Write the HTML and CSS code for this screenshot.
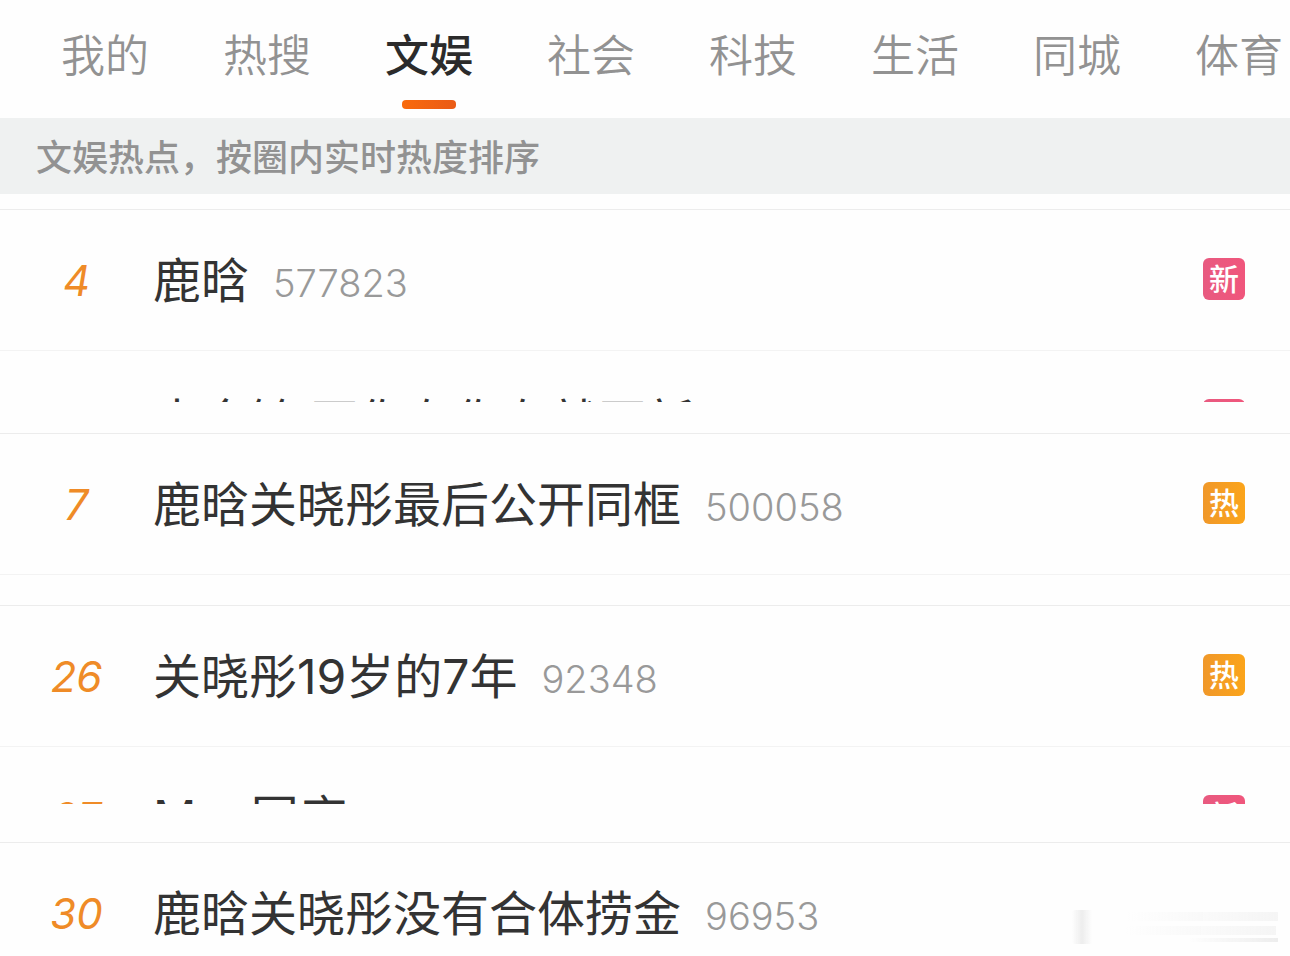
FILE: index.html
```html
<!DOCTYPE html>
<html lang="zh-CN">
<head>
    <meta charset="UTF-8">
    <meta name="viewport" content="width=device-width, initial-scale=1.0">
    <title>文娱热点</title>
    <link rel="stylesheet" href="styles.css">
</head>
<body>
    <nav class="tabs">
        <button class="tab" type="button">我的</button>
        <button class="tab" type="button">热搜</button>
        <button class="tab active" type="button">文娱</button>
        <button class="tab" type="button">社会</button>
        <button class="tab" type="button">科技</button>
        <button class="tab" type="button">生活</button>
        <button class="tab" type="button">同城</button>
        <button class="tab" type="button">体育</button>
    </nav>

    <p class="notice">文娱热点，按圈内实时热度排序</p>

    <main class="list">
        <section class="group">
            <a class="row" href="#">
                <span class="rank">4</span>
                <span class="title">鹿晗</span>
                <span class="count">577823</span>
                <span class="badge new">新</span>
            </a>
            <!-- folded row, only its top edge shows -->
            <div class="folded">
                <a class="row" href="#">
                    <span class="rank"></span>
                    <span class="title">木金铃 再你有你有就再新王</span>
                    <span class="badge new">新</span>
                </a>
            </div>
        </section>

        <section class="group">
            <a class="row" href="#">
                <span class="rank">7</span>
                <span class="title">鹿晗关晓彤最后公开同框</span>
                <span class="count">500058</span>
                <span class="badge hot">热</span>
            </a>
        </section>

        <section class="group">
            <a class="row" href="#">
                <span class="rank">26</span>
                <span class="title">关晓彤19岁的7年</span>
                <span class="count">92348</span>
                <span class="badge hot">热</span>
            </a>
            <div class="folded tall">
                <a class="row" href="#">
                    <span class="rank">27</span>
                    <span class="title">Mac国庆</span>
                    <span class="badge new">新</span>
                </a>
            </div>
        </section>

        <section class="group last">
            <a class="row" href="#">
                <span class="rank">30</span>
                <span class="title">鹿晗关晓彤没有合体捞金</span>
                <span class="count">96953</span>
            </a>
        </section>
    </main>

    <div class="watermark"></div>
</body>
</html>
```
FILE: styles.css
```css
* {
    box-sizing: border-box;
}

body {
    position: relative;
    margin: 0;
    min-height: 100vh;
    background: #fefefe;
    color: #333;
    font-family: Inter, "Noto Sans CJK SC", sans-serif;
}

.tabs {
    display: flex;
    gap: 74px;
    height: 118px;
    padding: 0 0 0 61px;
    overflow: hidden;
}

.tab {
    position: relative;
    flex: none;
    padding: 0 0 12px;
    border: none;
    background: none;
    color: #929292;
    font-family: "Noto Sans CJK SC", sans-serif;
    font-size: 44px;
    font-weight: 350;
    cursor: pointer;
}

.tab.active {
    color: #2b2b2b;
    font-weight: 500;
}

.tab.active::after {
    content: "";
    position: absolute;
    left: 17px;
    right: 17px;
    bottom: 9px;
    height: 9px;
    border-radius: 4px;
    background: linear-gradient(90deg, #f96a0c, #ea5b16);
}

.notice {
    margin: 0 0 15px;
    padding: 0 36px 2px;
    background: #eff1f1;
    color: #929292;
    font-family: "Noto Sans CJK SC", sans-serif;
    font-size: 36px;
    font-weight: 500;
    line-height: 74px;
}

.group {
    margin-bottom: 30px;
    border-top: 1px solid #ececec;
}

.group.last {
    margin-bottom: 0;
}

.row {
    display: flex;
    align-items: center;
    padding: 34px 45px 36px 0;
    border-bottom: 1px solid #f3f3f3;
    color: inherit;
    text-decoration: none;
}

.group.last .row {
    padding-bottom: 0;
    border-bottom: none;
}

.rank {
    flex: none;
    width: 153px;
    padding-top: 2px;
    color: #ef8b27;
    font-size: 42px;
    font-style: italic;
    font-weight: 400;
    text-align: center;
}

.title {
    padding-top: 4px;
    font-size: 48px;
    font-weight: 400;
    line-height: 66px;
    white-space: nowrap;
}

.count {
    margin-left: 24px;
    padding-top: 8px;
    color: #999;
    font-size: 38px;
    font-weight: 350;
}

.badge {
    width: 42px;
    height: 42px;
    margin-left: auto;
    border-radius: 6px;
    color: #fff;
    font-size: 30px;
    font-weight: 500;
    line-height: 42px;
    text-align: center;
}

.badge.new {
    background: linear-gradient(90deg, #e85a80, #f0567c);
}

.badge.hot {
    background: linear-gradient(90deg, #f0982a, #fba41a);
}

.folded {
    height: 51px;
    margin-bottom: 31px;
    overflow: hidden;
}

.folded.tall {
    height: 57px;
    margin-bottom: 38px;
}

.watermark {
    position: absolute;
    right: 12px;
    bottom: 12px;
    width: 206px;
    height: 34px;
    background:
        linear-gradient(90deg, transparent, #ededed, transparent) left / 20px 34px no-repeat,
        linear-gradient(90deg, transparent, #f5f5f5) right 0 top 2px / 150px 9px no-repeat,
        linear-gradient(90deg, transparent, #f5f5f5) right 2px top 16px / 150px 9px no-repeat,
        linear-gradient(90deg, transparent, #ededed) right 0 bottom 2px / 90px 4px no-repeat;
    border-radius: 3px;
}
```
